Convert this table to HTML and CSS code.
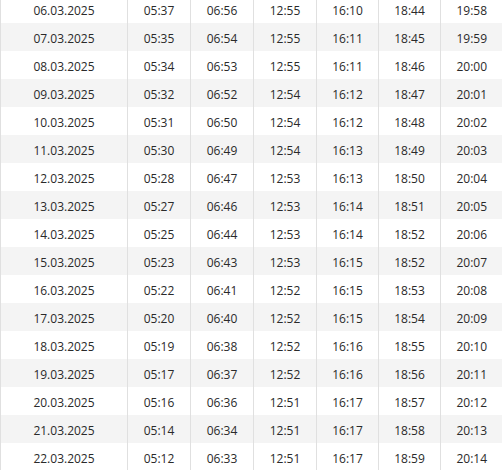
FILE: index.html
```html
<!DOCTYPE html>
<html>
<head>
<meta charset="utf-8">
<link rel="stylesheet" href="styles.css">
</head>
<body>
<table class="times">
<colgroup>
<col class="c-date"><col class="c-t"><col class="c-t"><col class="c-t"><col class="c-s"><col class="c-s"><col class="c-s">
</colgroup>
<tbody>
<tr><td>06.03.2025</td><td>05:37</td><td>06:56</td><td>12:55</td><td>16:10</td><td>18:44</td><td>19:58</td></tr>
<tr><td>07.03.2025</td><td>05:35</td><td>06:54</td><td>12:55</td><td>16:11</td><td>18:45</td><td>19:59</td></tr>
<tr><td>08.03.2025</td><td>05:34</td><td>06:53</td><td>12:55</td><td>16:11</td><td>18:46</td><td>20:00</td></tr>
<tr><td>09.03.2025</td><td>05:32</td><td>06:52</td><td>12:54</td><td>16:12</td><td>18:47</td><td>20:01</td></tr>
<tr><td>10.03.2025</td><td>05:31</td><td>06:50</td><td>12:54</td><td>16:12</td><td>18:48</td><td>20:02</td></tr>
<tr><td>11.03.2025</td><td>05:30</td><td>06:49</td><td>12:54</td><td>16:13</td><td>18:49</td><td>20:03</td></tr>
<tr><td>12.03.2025</td><td>05:28</td><td>06:47</td><td>12:53</td><td>16:13</td><td>18:50</td><td>20:04</td></tr>
<tr><td>13.03.2025</td><td>05:27</td><td>06:46</td><td>12:53</td><td>16:14</td><td>18:51</td><td>20:05</td></tr>
<tr><td>14.03.2025</td><td>05:25</td><td>06:44</td><td>12:53</td><td>16:14</td><td>18:52</td><td>20:06</td></tr>
<tr><td>15.03.2025</td><td>05:23</td><td>06:43</td><td>12:53</td><td>16:15</td><td>18:52</td><td>20:07</td></tr>
<tr><td>16.03.2025</td><td>05:22</td><td>06:41</td><td>12:52</td><td>16:15</td><td>18:53</td><td>20:08</td></tr>
<tr><td>17.03.2025</td><td>05:20</td><td>06:40</td><td>12:52</td><td>16:15</td><td>18:54</td><td>20:09</td></tr>
<tr><td>18.03.2025</td><td>05:19</td><td>06:38</td><td>12:52</td><td>16:16</td><td>18:55</td><td>20:10</td></tr>
<tr><td>19.03.2025</td><td>05:17</td><td>06:37</td><td>12:52</td><td>16:16</td><td>18:56</td><td>20:11</td></tr>
<tr><td>20.03.2025</td><td>05:16</td><td>06:36</td><td>12:51</td><td>16:17</td><td>18:57</td><td>20:12</td></tr>
<tr><td>21.03.2025</td><td>05:14</td><td>06:34</td><td>12:51</td><td>16:17</td><td>18:58</td><td>20:13</td></tr>
<tr><td>22.03.2025</td><td>05:12</td><td>06:33</td><td>12:51</td><td>16:17</td><td>18:59</td><td>20:14</td></tr>
</tbody>
</table>
</body>
</html>
```
FILE: styles.css
```css
html, body {
  margin: 0;
  padding: 0;
  background: #ffffff;
  overflow: hidden;
}
.times {
  border-collapse: collapse;
  table-layout: fixed;
  width: 502px;
  margin-top: -5px;
  font-family: "Open Sans", "Noto Sans", sans-serif;
  font-size: 12px;
  color: #2a2a2a;
}
.c-date { width: 127px; }
.c-t { width: 63px; }
.c-s { width: 62px; }
.times td {
  height: 28px;
  padding: 3px 0 0 0;
  text-align: center;
  vertical-align: middle;
  border-left: 1px solid #e0e0e0;
  box-sizing: border-box;
  line-height: 16px;
}
.times tr:nth-child(even) td {
  background: #f4f4f4;
}
```
